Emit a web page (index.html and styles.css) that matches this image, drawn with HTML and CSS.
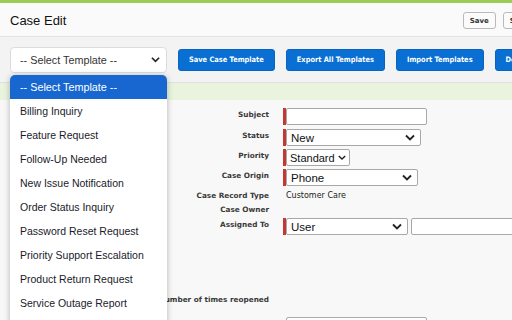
FILE: index.html
```html
<!DOCTYPE html>
<html>
<head>
<meta charset="utf-8">
<link rel="stylesheet" href="styles.css">
</head>
<body>
<div class="page">
  <div class="accent"></div>
  <div class="header">
    <div class="title">Case Edit</div>
    <div class="hbtns">
      <button class="sbtn">Save</button>
      <button class="sbtn">Save &amp; New</button>
    </div>
  </div>
  <div class="toolbar">
    <div class="tselect"><span>-- Select Template --</span>
      <svg class="chev" width="10" height="7" viewBox="0 0 10 7"><path d="M1 1.5 L5 5.5 L9 1.5" fill="none" stroke="#222" stroke-width="1.8"/></svg>
    </div>
    <button class="bbtn">Save Case Template</button>
    <button class="bbtn">Export All Templates</button>
    <button class="bbtn">Import Templates</button>
    <button class="bbtn">Delete Template</button>
  </div>
  <div class="band"></div>
  <div class="form">
    <div class="row r21"><div class="lbl">Subject</div><div class="req"></div><div class="inp w141"></div></div>
    <div class="row r20"><div class="lbl">Status</div><div class="req"></div><div class="sel w135"><span>New</span><svg class="chev" width="10" height="7" viewBox="0 0 10 7"><path d="M1 1.5 L5 5.5 L9 1.5" fill="none" stroke="#222" stroke-width="1.8"/></svg></div></div>
    <div class="row r20"><div class="lbl">Priority</div><div class="req"></div><div class="sel w63 sm"><span>Standard</span><svg class="chev" width="10" height="7" viewBox="0 0 10 7"><path d="M1 1.5 L5 5.5 L9 1.5" fill="none" stroke="#222" stroke-width="1.8"/></svg></div></div>
    <div class="row r20"><div class="lbl">Case Origin</div><div class="req"></div><div class="sel w132"><span>Phone</span><svg class="chev" width="10" height="7" viewBox="0 0 10 7"><path d="M1 1.5 L5 5.5 L9 1.5" fill="none" stroke="#222" stroke-width="1.8"/></svg></div></div>
    <div class="row r14"><div class="lbl">Case Record Type</div><div class="noreq"></div><div class="val">Customer Care</div></div>
    <div class="row r15"><div class="lbl">Case Owner</div><div class="noreq"></div><div class="val"></div></div>
    <div class="row r75"><div class="lbl">Assigned To</div><div class="req"></div><div class="sel w122"><span>User</span><svg class="chev" width="10" height="7" viewBox="0 0 10 7"><path d="M1 1.5 L5 5.5 L9 1.5" fill="none" stroke="#222" stroke-width="1.8"/></svg></div><div class="inp w110 ml3"></div></div>
    <div class="row r24"><div class="lbl">Number of times reopened</div><div class="noreq"></div><div class="val"></div></div>
    <div class="row r20"><div class="lbl">Parent Case</div><div class="noreq"></div><div class="inp w141"></div><span class="lk">Q</span></div>
  </div>

  <div class="dropdown">
    <div class="opt active">-- Select Template --</div>
    <div class="opt">Billing Inquiry</div>
    <div class="opt">Feature Request</div>
    <div class="opt">Follow-Up Needed</div>
    <div class="opt">New Issue Notification</div>
    <div class="opt">Order Status Inquiry</div>
    <div class="opt">Password Reset Request</div>
    <div class="opt">Priority Support Escalation</div>
    <div class="opt">Product Return Request</div>
    <div class="opt">Service Outage Report</div>
    <div class="opt">Technical Support</div>
  </div>
</div>
</body>
</html>
```

FILE: styles.css
```css
html, body {
  margin: 0;
  padding: 0;
  width: 512px;
  height: 320px;
  overflow: hidden;
  background: #f8f8f8;
  font-family: "Liberation Sans", Arial, sans-serif;
}
.page {
  position: relative;
  width: 512px;
  height: 320px;
  overflow: hidden;
}
.accent {
  height: 3px;
  background: #9ccc55;
}
.header {
  height: 34px;
  background: #fafafa;
  border-bottom: 1px solid #e2e2e2;
  display: flex;
  align-items: center;
  justify-content: space-between;
  padding-left: 10px;
  box-sizing: border-box;
}
.title {
  font-size: 13px;
  color: #111;
  padding-top: 1px;
}
.hbtns {
  display: flex;
  gap: 7px;
  margin-right: -52px;
  padding-top: 2px;
}
.sbtn {
  height: 17px;
  padding: 0 6px;
  background: #fbfbfb;
  border: 1px solid #b9b9b9;
  border-radius: 3px;
  font-family: "DejaVu Sans", Verdana, sans-serif;
  font-weight: bold;
  font-size: 7px;
  color: #333;
  white-space: nowrap;
  box-sizing: border-box;
}
.toolbar {
  height: 46px;
  background: #f3f3f3;
  border-bottom: 1px solid #e0e0e0;
  display: flex;
  align-items: center;
  padding-left: 10px;
  gap: 10px;
  box-sizing: border-box;
  white-space: nowrap;
}
.tselect {
  flex: none;
  width: 157px;
  height: 26px;
  background: #fff;
  border: 1px solid #dcdcdc;
  border-radius: 4px;
  box-sizing: border-box;
  display: flex;
  align-items: center;
  justify-content: space-between;
  padding: 0 6px 0 9px;
  font-size: 10.8px;
  color: #333;
}
.tselect .chev { width: 9px; }
.bbtn {
  flex: none;
  height: 22px;
  padding: 0 10px;
  background: #0a6fd3;
  border: 1px solid #0864c0;
  border-radius: 3px;
  color: #fff;
  font-family: "DejaVu Sans", Verdana, sans-serif;
  font-stretch: condensed;
  font-weight: bold;
  font-size: 7.4px;
  box-sizing: border-box;
  margin-left: 1px;
}
.band {
  height: 17px;
  background: #eaf3dd;
}
.form {
  padding-top: 8px;
}
.row {
  display: flex;
  align-items: flex-start;
}
.r21 { height: 21px; }
.r20 { height: 20px; }
.r14 { height: 14px; }
.r15 { height: 15px; }
.r75 { height: 75px; }
.r24 { height: 24px; }
.lbl {
  width: 269px;
  flex: none;
  text-align: right;
  font-family: "DejaVu Sans", Verdana, sans-serif;
  font-weight: bold;
  font-size: 7.3px;
  color: #3a3a3a;
  padding-top: 2px;
  white-space: nowrap;
}
.req {
  flex: none;
  width: 3px;
  height: 17px;
  background: #c23934;
  margin-left: 14px;
}
.noreq {
  flex: none;
  width: 3px;
  margin-left: 14px;
}
.inp {
  flex: none;
  height: 17px;
  background: #fff;
  border: 1px solid #a8a8a8;
  border-radius: 2px;
  box-sizing: border-box;
}
.sel {
  flex: none;
  height: 17px;
  background: #fff;
  border: 1px solid #a8a8a8;
  border-radius: 2px;
  box-sizing: border-box;
  display: flex;
  align-items: center;
  justify-content: space-between;
  padding: 0 5px 0 4px;
  font-size: 11.5px;
  color: #111;
}
.sel.sm { padding: 0 3px 0 3px; font-size: 11px; }
.sel.sm .chev { width: 8px; }
.chev { flex: none; }
.w141 { width: 141px; }
.w135 { width: 135px; }
.w63 { width: 64px; }
.w132 { width: 132px; }
.w122 { width: 122px; }
.w110 { width: 110px; }
.ml3 { margin-left: 3px; }
.val {
  font-family: "DejaVu Sans", Verdana, sans-serif;
  font-size: 8px;
  color: #222;
  padding-top: 2px;
}
.lk {
  font-size: 9px;
  color: #888;
  margin-left: 6px;
  padding-top: 3px;
}
.dropdown {
  position: absolute;
  left: 10px;
  top: 75px;
  width: 157px;
  background: #fff;
  border-radius: 5px 5px 0 0;
  box-shadow: 0 1px 6px rgba(0,0,0,0.28);
  overflow: hidden;
}
.opt {
  height: 24px;
  line-height: 24px;
  padding-left: 10px;
  font-size: 10.5px;
  color: #1a1a2a;
  white-space: nowrap;
}
.opt.active {
  background: #1867d1;
  color: #fff;
  font-size: 10.8px;
}
```
